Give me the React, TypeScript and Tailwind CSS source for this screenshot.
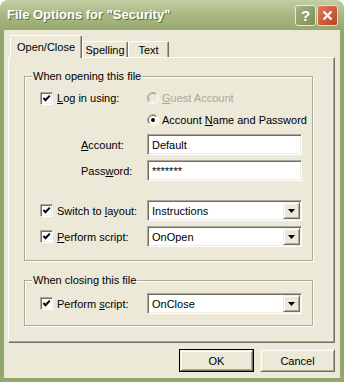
import React from 'react';

// classic raised / sunken 3D edges in the XP beige palette
const sunken =
  'border border-t-[#aca899] border-l-[#aca899] border-r-white border-b-white shadow-[inset_1px_1px_0_#716f64,inset_-1px_-1px_0_#f1efe2]';
const raised =
  'border border-t-[#f1efe2] border-l-[#f1efe2] border-r-[#716f64] border-b-[#716f64] shadow-[inset_1px_1px_0_#fff,inset_-1px_-1px_0_#aca899]';

function U({ children }: { children: React.ReactNode }) {
  return <span className="underline decoration-1 underline-offset-[1px]">{children}</span>;
}

function CheckBox() {
  return (
    <span className={`w-[13px] h-[13px] shrink-0 bg-white flex items-center justify-center ${sunken}`}>
      <svg width="9" height="9" viewBox="0 0 9 9">
        <polyline points="1.5,4 3.5,6.2 7.8,1.6" stroke="#000" strokeWidth="2" fill="none" />
      </svg>
    </span>
  );
}

function Radio({ id, checked = false, disabled = false }: { id: string; checked?: boolean; disabled?: boolean }) {
  return (
    <svg width="12" height="12" viewBox="0 0 12 12" className="shrink-0">
      <defs>
        <linearGradient id={`${id}-o`} x1="0" y1="0" x2="1" y2="1">
          <stop offset="0.5" stopColor="#aca899" />
          <stop offset="0.5" stopColor="#ffffff" />
        </linearGradient>
        <linearGradient id={`${id}-i`} x1="0" y1="0" x2="1" y2="1">
          <stop offset="0.5" stopColor={disabled ? '#aca899' : '#716f64'} />
          <stop offset="0.5" stopColor="#f1efe2" />
        </linearGradient>
      </defs>
      <circle cx="6" cy="6" r="5.5" fill="none" stroke={`url(#${id}-o)`} />
      <circle cx="6" cy="6" r="4.5" fill={disabled ? '#ece9d8' : '#ffffff'} stroke={`url(#${id}-i)`} />
      {checked && <circle cx="6" cy="6" r="2" fill="#000" />}
    </svg>
  );
}

function Field({ value }: { value: string }) {
  return (
    <div className={`w-[155px] h-[21px] bg-white flex items-center pl-[4px] ${sunken}`}>{value}</div>
  );
}

function Combo({ value }: { value: string }) {
  return (
    <div className={`w-[155px] h-[21px] bg-white flex items-center p-[1px] ${sunken}`}>
      <span className="flex-1 pl-[3px]">{value}</span>
      <span className={`w-[17px] h-[17px] bg-[#ece9d8] flex items-center justify-center ${raised}`}>
        <svg width="7" height="4" viewBox="0 0 7 4">
          <polygon points="0,0 7,0 3.5,4" fill="#000" />
        </svg>
      </span>
    </div>
  );
}

function Group({ label, className = '', children }: { label: string; className?: string; children: React.ReactNode }) {
  return (
    <div
      className={`relative ml-[15px] w-[289px] border border-[#aca899] shadow-[1px_1px_0_#fff,inset_1px_1px_0_#fff] ${className}`}
    >
      <span className="absolute -top-[8px] left-[7px] px-[1px] bg-[#ece9d8] leading-[14px]">{label}</span>
      {children}
    </div>
  );
}

function Tab({ label, selected = false, className = '' }: { label: string; selected?: boolean; className?: string }) {
  if (selected) {
    return (
      <div
        className={`h-[23px] bg-[#ece9d8] border-t border-l border-t-white border-l-white border-r border-r-[#716f64] shadow-[inset_-1px_0_0_#aca899] rounded-t-[2px] flex justify-center pt-[4px] relative z-10 ${className}`}
      >
        {label}
      </div>
    );
  }
  return (
    <div
      className={`h-[17px] bg-[#ece9d8] border-t border-l border-t-white border-l-white border-r border-r-[#716f64] shadow-[inset_-1px_0_0_#aca899] rounded-t-[2px] flex items-center justify-center ${className}`}
    >
      {label}
    </div>
  );
}

function CheckLabel({ children }: { children: React.ReactNode }) {
  return (
    <div className="w-[107px] flex items-center">
      <CheckBox />
      <span className="ml-[4px]">{children}</span>
    </div>
  );
}

export default function App() {
  return (
    <div className="w-[344px] h-[382px] flex flex-col font-['Liberation_Sans',Arial,sans-serif] text-[11px] leading-[14px] text-black">
      {/* title bar */}
      <div className="h-[30px] shrink-0 rounded-t-[8px] bg-gradient-to-b from-[#c3cea4] via-[#a9b883] to-[#97a86f] flex items-center pl-[7px] pr-[6px]">
        <span className="flex-1 text-[13px] font-bold text-white [text-shadow:1px_1px_0_#5f6f3c]">
          File Options for "Security"
        </span>
        <div className="flex gap-[1px]">
          <span className="w-[21px] h-[21px] rounded-[3px] border border-[#e6ebd8] bg-gradient-to-br from-[#a5b486] to-[#7a8d55] flex items-center justify-center text-white font-bold text-[15px] leading-none">
            ?
          </span>
          <span className="w-[21px] h-[21px] rounded-[3px] border border-[#f0d8cc] bg-gradient-to-br from-[#e0795a] to-[#bd4124] flex items-center justify-center">
            <svg width="11" height="11" viewBox="0 0 11 11">
              <path d="M1.5 1.5 L9.5 9.5 M9.5 1.5 L1.5 9.5" stroke="#fff" strokeWidth="2.2" />
            </svg>
          </span>
        </div>
      </div>

      {/* body */}
      <div className="flex-1 flex flex-col bg-[#ece9d8] border-x-4 border-b-4 border-[#93a66b]">
        {/* tabs */}
        <div className="flex items-end pl-[6px] pt-[5px] -mb-px">
          <Tab label="Open/Close" selected className="w-[72px]" />
          <Tab label="Spelling" className="w-[46px]" />
          <Tab label="Text" className="w-[41px]" />
        </div>

        {/* tab panel */}
        <div className="ml-[4px] mr-[5px] pb-[16px] border border-t-white border-l-white border-r-[#716f64] border-b-[#716f64] shadow-[inset_-1px_-1px_0_#aca899]">
          <Group label="When opening this file" className="mt-[18px]">
            <div className="pl-[15px] pt-[10px] pb-[13px]">
              <div className="h-[22px] flex items-center">
                <CheckLabel>
                  <U>L</U>og in using:
                </CheckLabel>
                <div className="flex items-center text-[#aca899]">
                  <Radio id="r1" disabled />
                  <span className="ml-[3px]">
                    <U>G</U>uest Account
                  </span>
                </div>
              </div>
              <div className="h-[22px] flex items-center pl-[107px]">
                <Radio id="r2" checked />
                <span className="ml-[3px]">
                  Account <U>N</U>ame and Password
                </span>
              </div>
              <div className="mt-[3px] flex items-center">
                <div className="w-[107px] pl-[41px]">
                  <U>A</U>ccount:
                </div>
                <Field value="Default" />
              </div>
              <div className="mt-[5px] flex items-center">
                <div className="w-[107px] pl-[41px]">
                  Pass<U>w</U>ord:
                </div>
                <Field value="*******" />
              </div>
              <div className="mt-[19px] flex items-center">
                <CheckLabel>
                  Switch to <U>l</U>ayout:
                </CheckLabel>
                <Combo value="Instructions" />
              </div>
              <div className="mt-[5px] flex items-center">
                <CheckLabel>
                  <U>P</U>erform script:
                </CheckLabel>
                <Combo value="OnOpen" />
              </div>
            </div>
          </Group>

          <Group label="When closing this file" className="mt-[19px]">
            <div className="pl-[15px] pt-[12px] pb-[11px] flex items-center">
              <CheckLabel>
                Perform <U>s</U>cript:
              </CheckLabel>
              <Combo value="OnClose" />
            </div>
          </Group>
        </div>

        {/* buttons */}
        <div className="mt-[6px] pr-[5px] flex justify-end gap-[6px]">
          <button className="w-[75px] h-[23px] border border-black bg-[#ece9d8] p-0">
            <span className={`w-full h-full flex items-center justify-center ${raised}`}>OK</span>
          </button>
          <button className={`w-[75px] h-[23px] bg-[#ece9d8] flex items-center justify-center ${raised}`}>
            Cancel
          </button>
        </div>
      </div>
    </div>
  );
}
